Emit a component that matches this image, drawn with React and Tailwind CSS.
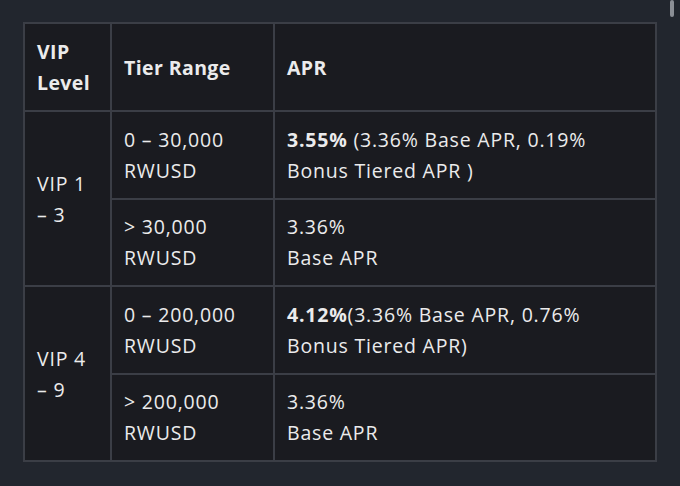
const rows = [
  {
    level: ['VIP 1', '– 3'],
    tiers: [
      { range: ['0 – 30,000', 'RWUSD'], bold: '3.55%', rest: [' (3.36% Base APR, 0.19%', 'Bonus Tiered APR )'] },
      { range: ['> 30,000', 'RWUSD'], bold: null, rest: ['3.36%', 'Base APR'] },
    ],
  },
  {
    level: ['VIP 4', '– 9'],
    tiers: [
      { range: ['0 – 200,000', 'RWUSD'], bold: '4.12%', rest: ['(3.36% Base APR, 0.76%', 'Bonus Tiered APR)'] },
      { range: ['> 200,000', 'RWUSD'], bold: null, rest: ['3.36%', 'Base APR'] },
    ],
  },
]

const cell = 'border-2 border-[#3b3e46] px-[12px] align-middle whitespace-nowrap'

function Lines({ lines, lead }) {
  return (
    <>
      {lead && <span className="font-bold">{lead}</span>}
      {lines[0]}
      <br />
      {lines[1]}
    </>
  )
}

export default function App() {
  return (
    <div
      className="relative h-[486px] w-[680px] overflow-hidden bg-[#22262e] text-[#ebebec]"
      style={{ fontFamily: '"Open Sans", sans-serif' }}
    >
      {/* scrollbar thumb */}
      <div className="absolute right-[6px] top-0 h-[17px] w-[4px] rounded-full bg-[#8b8e95]" />

      <div className="pl-[23px] pt-[22px]">
        <table className="w-[634px] table-fixed border-collapse bg-[#1a1b20] text-[19.5px] leading-[31px] tracking-[0.8px]">
          <colgroup>
            <col className="w-[87px]" />
            <col className="w-[163px]" />
            <col />
          </colgroup>
          <thead>
            <tr className="h-[88px] text-left font-bold tracking-[0.4px]">
              <th className={cell}>
                VIP
                <br />
                Level
              </th>
              <th className={cell}>Tier Range</th>
              <th className={cell}>APR</th>
            </tr>
          </thead>
          <tbody>
            {rows.map((r) =>
              r.tiers.map((t, i) => (
                <tr key={r.level[0] + i} className="h-[87.5px]">
                  {i === 0 && (
                    <td rowSpan={2} className={cell}>
                      <Lines lines={r.level} />
                    </td>
                  )}
                  <td className={cell}>
                    <Lines lines={t.range} />
                  </td>
                  <td className={cell}>
                    <Lines lines={t.rest} lead={t.bold} />
                  </td>
                </tr>
              ))
            )}
          </tbody>
        </table>
      </div>
    </div>
  )
}
